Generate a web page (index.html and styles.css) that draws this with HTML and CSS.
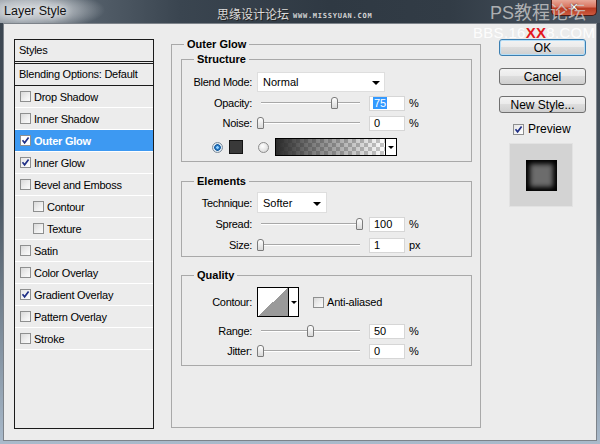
FILE: index.html
```html
<!DOCTYPE html>
<html>
<head>
<meta charset="utf-8">
<title>Layer Style</title>
<link rel="stylesheet" href="styles.css">
</head>
<body>
<div class="window">
  <div class="titlebar">
    <div class="title">Layer Style</div>
    <span class="wm-cn">思缘设计论坛</span>
    <span class="wm-url">WWW.MISSYUAN.COM</span>
    <span class="wm-ps">PS教程论坛</span>
  </div>
  <div class="client">
    <div class="styles">
      <div class="s-head">Styles</div>
      <div class="s-blend">Blending Options: Default</div>
      <div class="s-row"><span class="cb"></span>Drop Shadow</div>
      <div class="s-row"><span class="cb"></span>Inner Shadow</div>
      <div class="s-row sel"><span class="cb on"><svg width="9" height="9" viewBox="0 0 9 9"><path d="M1.5 4.3 L3.6 6.8 L7.6 1.6" fill="none" stroke="#1f2f86" stroke-width="1.7"/></svg></span>Outer Glow</div>
      <div class="s-row"><span class="cb on"><svg width="9" height="9" viewBox="0 0 9 9"><path d="M1.5 4.3 L3.6 6.8 L7.6 1.6" fill="none" stroke="#1f2f86" stroke-width="1.7"/></svg></span>Inner Glow</div>
      <div class="s-row"><span class="cb"></span>Bevel and Emboss</div>
      <div class="s-row sub"><span class="cb"></span>Contour</div>
      <div class="s-row sub"><span class="cb"></span>Texture</div>
      <div class="s-row"><span class="cb"></span>Satin</div>
      <div class="s-row"><span class="cb"></span>Color Overlay</div>
      <div class="s-row"><span class="cb on"><svg width="9" height="9" viewBox="0 0 9 9"><path d="M1.5 4.3 L3.6 6.8 L7.6 1.6" fill="none" stroke="#1f2f86" stroke-width="1.7"/></svg></span>Gradient Overlay</div>
      <div class="s-row"><span class="cb"></span>Pattern Overlay</div>
      <div class="s-row"><span class="cb"></span>Stroke</div>
    </div>

    <fieldset class="group main">
      <legend>Outer Glow</legend>

      <fieldset class="group sub-group structure">
        <legend>Structure</legend>
        <div class="f-row blend-row">
          <span class="lbl">Blend Mode:</span>
          <div class="select blend-select">Normal</div>
        </div>
        <div class="f-row gap1">
          <span class="lbl">Opacity:</span>
          <div class="slider"><span class="thumb" style="--v:75"></span></div>
          <div class="num"><span class="hl">75</span></div>
          <span class="unit">%</span>
        </div>
        <div class="f-row">
          <span class="lbl">Noise:</span>
          <div class="slider"><span class="thumb" style="--v:0"></span></div>
          <div class="num">0</div>
          <span class="unit">%</span>
        </div>
        <div class="f-row color-row">
          <span class="radio on"></span>
          <span class="swatch"></span>
          <span class="radio second"></span>
          <div class="grad"><div class="grad-fill"></div><div class="grad-arrow"></div></div>
        </div>
      </fieldset>

      <fieldset class="group sub-group elements">
        <legend>Elements</legend>
        <div class="f-row tech-row">
          <span class="lbl">Technique:</span>
          <div class="select tech-select">Softer</div>
        </div>
        <div class="f-row gap1">
          <span class="lbl">Spread:</span>
          <div class="slider"><span class="thumb" style="--v:100"></span></div>
          <div class="num">100</div>
          <span class="unit">%</span>
        </div>
        <div class="f-row gap1">
          <span class="lbl">Size:</span>
          <div class="slider"><span class="thumb" style="--v:0"></span></div>
          <div class="num">1</div>
          <span class="unit">px</span>
        </div>
      </fieldset>

      <fieldset class="group sub-group quality">
        <legend>Quality</legend>
        <div class="f-row contour-row">
          <span class="lbl">Contour:</span>
          <div class="contour"><div class="contour-curve"></div><div class="contour-arrow"></div></div>
          <span class="cb aa"></span>
          <span class="aa-text">Anti-aliased</span>
        </div>
        <div class="f-row range-row">
          <span class="lbl">Range:</span>
          <div class="slider"><span class="thumb" style="--v:50"></span></div>
          <div class="num">50</div>
          <span class="unit">%</span>
        </div>
        <div class="f-row">
          <span class="lbl">Jitter:</span>
          <div class="slider"><span class="thumb" style="--v:0"></span></div>
          <div class="num">0</div>
          <span class="unit">%</span>
        </div>
      </fieldset>
    </fieldset>

    <div class="side">
      <div class="btn def">OK</div>
      <div class="btn cancel">Cancel</div>
      <div class="btn newstyle">New Style...</div>
      <div class="preview-row"><span class="cb on"><svg width="9" height="9" viewBox="0 0 9 9"><path d="M1.5 4.3 L3.6 6.8 L7.6 1.6" fill="none" stroke="#1f2f86" stroke-width="1.7"/></svg></span><span>Preview</span></div>
      <div class="preview"><div class="preview-sq"></div></div>
    </div>

    <div class="wm-bbs">BBS.16<span class="red">XX</span>8.COM</div>
  </div>
  <div class="winx">✕</div>
</div>
</body>
</html>
```

FILE: styles.css
```css
* { box-sizing: border-box; }

body {
  margin: 0;
  font-family: "Liberation Sans", Arial, sans-serif;
  font-size: 11px;
  color: #000;
}

.window {
  width: 600px;
  height: 444px;
  display: flex;
  flex-direction: column;
  position: relative;
  overflow: hidden;
  background: linear-gradient(#39434e 0%, #4a5661 45%, #a9bacb 100%);
}

/* ---------- title bar ---------- */
.titlebar {
  height: 23px;
  flex-shrink: 0;
  position: relative;
  background:
    radial-gradient(ellipse 75px 20px at 30px 10px, rgba(214,218,222,0.98) 0%, rgba(200,205,210,0.8) 45%, rgba(120,130,140,0) 100%),
    linear-gradient(to right, #7d868f 0%, #56616c 14%, #3a4550 30%, #2f3943 55%, #323c46 75%, #4a5561 100%);
}

.title {
  padding: 4px 0 0 4px;
  font-size: 12.5px;
  line-height: 14px;
  color: #111;
  text-shadow: 0 0 5px #e8eaec, 0 0 9px #e8eaec;
}

.winx {
  position: absolute;
  z-index: 5;
  left: 551px;
  top: 0;
  width: 46px;
  height: 16px;
  border: 1px solid #4b1a14;
  border-top-width: 0;
  border-radius: 0 0 5px 5px;
  background: #c75038 linear-gradient(#e8a898 0%, #d97560 45%, #b83a22 55%, #cc5a3e 100%);
  color: #fff;
  font-family: "DejaVu Sans", sans-serif;
  font-weight: bold;
  font-size: 11px;
  line-height: 15px;
  text-align: center;
  text-shadow: 0 0 2px #4a1810, 0 0 1px #4a1810;
}

.wm-cn {
  position: absolute;
  left: 217px;
  top: 6px;
  font-family: "Noto Sans CJK SC", sans-serif;
  font-size: 12px;
  line-height: 16px;
  color: #dcdcdc;
  text-shadow: 1px 1px 0 #222, -1px 0 0 #444;
}

.wm-url {
  position: absolute;
  left: 293px;
  top: 12px;
  font-family: "DejaVu Sans Mono", monospace;
  font-weight: bold;
  font-size: 7px;
  line-height: 8px;
  letter-spacing: 0.75px;
  color: #d4d4d4;
}

.wm-ps {
  position: absolute;
  z-index: 6;
  left: 490px;
  top: 1px;
  font-family: "Liberation Sans", "Noto Sans CJK SC", sans-serif;
  font-size: 18px;
  line-height: 24px;
  color: rgba(205,205,205,0.8);
}

/* ---------- client area ---------- */
.client {
  flex: 1;
  margin: 0 3px 3px;
  border: 1px solid #7d838a;
  background: #ececec;
  display: flex;
  align-items: flex-start;
  padding: 15px 0 0 10px;
  position: relative;
}

.wm-bbs {
  position: absolute;
  left: 469px;
  top: 1px;
  font-size: 15px;
  line-height: 16px;
  letter-spacing: 0.3px;
  color: rgba(255,255,255,0.9);
  white-space: nowrap;
}
.wm-bbs .red {
  color: #e3171d;
  font-weight: bold;
}

/* ---------- styles list ---------- */
.styles {
  width: 140px;
  height: 390px;
  flex-shrink: 0;
  border: 1px solid #1b1b1b;
  letter-spacing: -0.25px;
}

.s-head {
  height: 24px;
  line-height: 21px;
  padding-left: 4px;
  border-bottom: 3px double #1b1b1b;
}

.s-blend {
  height: 22px;
  line-height: 21px;
  padding-left: 4px;
  border-bottom: 1px solid #1b1b1b;
}

.s-row {
  height: 22px;
  border-bottom: 1px solid #fff;
  display: flex;
  align-items: center;
  gap: 3px;
  padding-left: 5px;
}
.s-row.sub { padding-left: 18px; }
.s-row.sel {
  background: #3d99f2;
  color: #fff;
  font-weight: bold;
}
.s-row.sel .cb { background: #fff; }

.cb {
  width: 11px;
  height: 11px;
  flex-shrink: 0;
  border: 1px solid #8e8f8f;
  background: linear-gradient(135deg, #d9d9d9 0%, #f0f0f0 60%, #fbfbfb 100%);
  display: inline-flex;
  align-items: center;
  justify-content: center;
}
.cb.on { background: linear-gradient(135deg, #e6e6e6, #ffffff); }

/* ---------- fieldsets ---------- */
.group {
  margin: 0;
  min-width: 0;
  border: 1px solid #a9a9a9;
  padding: 0;
}
.group > legend {
  font-weight: bold;
  font-size: 11px;
  line-height: 14px;
  padding: 0 3px;
}

.main {
  width: 310px;
  height: 391px;
  flex-shrink: 0;
  margin: -2px 0 0 17px;
  padding: 1px 8px 0 9px;
}
.main > legend { margin-left: 3px; }

.sub-group > legend { margin-left: 12px; }
.structure { padding: 6px 0 4px; }
.elements { margin-top: 12px; padding: 4px 0 1px; }
.quality { margin-top: 11px; padding: 5px 0 4px; }

.f-row {
  display: flex;
  align-items: center;
  height: 20px;
}
.gap1 { margin-top: 1px; }

.lbl {
  width: 70px;
  margin-right: 5px;
  flex-shrink: 0;
  text-align: right;
  letter-spacing: -0.3px;
}

.select {
  position: relative;
  background: #fff;
  border: 1px solid #dedede;
  display: flex;
  align-items: center;
  padding-left: 5px;
}
.select::after {
  content: "";
  position: absolute;
  top: 50%;
  margin-top: -1px;
  border-left: 4px solid transparent;
  border-right: 4px solid transparent;
  border-top: 4px solid #000;
}
.blend-select { width: 128px; height: 20px; }
.blend-select::after { right: 4px; }
.tech-row { height: 21px; }
.tech-select { width: 70px; height: 21px; }
.tech-select::after { right: 5px; }

.slider {
  width: 106px;
  height: 20px;
  position: relative;
  flex-shrink: 0;
}
.slider::before {
  content: "";
  position: absolute;
  left: 4px;
  right: 3px;
  top: 9px;
  height: 1px;
  background: #a8a8a8;
  box-shadow: 0 1px 0 #fff;
}
.thumb {
  position: absolute;
  top: 4px;
  left: calc(var(--v) * 0.99px);
  width: 7px;
  height: 12px;
  border: 1px solid #7b7b7b;
  border-radius: 3px 3px 1px 1px;
  background: linear-gradient(#ffffff, #d9d9d9);
}

.num {
  width: 36px;
  height: 15px;
  margin-left: 6px;
  flex-shrink: 0;
  background: #fff;
  border: 1px solid #d6d6d6;
  padding-left: 4px;
  line-height: 13px;
}
.hl {
  display: inline-block;
  background: #3399ff;
  color: #fff;
  padding: 0 1px;
  line-height: 12px;
  margin-left: -1px;
}
.unit { margin-left: 4px; }

.color-row { margin-top: 4px; padding-left: 30px; }
.radio {
  width: 11px;
  height: 11px;
  flex-shrink: 0;
  border-radius: 50%;
  border: 1px solid #8c8c8c;
  background: radial-gradient(circle at 40% 35%, #ffffff 0%, #e6e6e6 55%, #cfcfcf 100%);
}
.radio.on {
  border-color: #7d8b99;
  background: radial-gradient(circle at 50% 50%, #8fd0ff 0 1px, #2577c6 1.6px, #1b5f9f 3px, #d8e6f2 3.6px, #f4f4f4 100%);
}
.radio.second { margin-left: 15px; }
.swatch {
  width: 14px;
  height: 14px;
  margin-left: 6px;
  flex-shrink: 0;
  background: #393939;
  border: 1px solid #141414;
}
.grad {
  width: 122px;
  height: 18px;
  margin-left: 6px;
  border: 1px solid #000;
  display: flex;
}
.grad-fill {
  flex: 1;
  background:
    linear-gradient(to right, #2a2a2a 0%, rgba(42,42,42,0.6) 35%, rgba(42,42,42,0) 100%),
    repeating-conic-gradient(#c8c8c8 0 25%, #ffffff 0 50%) 0 0 / 8px 8px;
}
.grad-arrow {
  width: 11px;
  border-left: 1px solid #000;
  background: #fff;
  position: relative;
}
.grad-arrow::after, .contour-arrow::after {
  content: "";
  position: absolute;
  left: 50%;
  top: 50%;
  margin: -1px 0 0 -3px;
  border-left: 3px solid transparent;
  border-right: 3px solid transparent;
  border-top: 3px solid #000;
}

.contour-row { height: 30px; }
.contour {
  width: 42px;
  height: 30px;
  border: 1px solid #000;
  display: flex;
  flex-shrink: 0;
}
.contour-curve {
  width: 30px;
  background: linear-gradient(to bottom right, #ffffff 50%, #9a9a9a 50%);
}
.contour-arrow {
  flex: 1;
  border-left: 1px solid #000;
  background: #fff;
  position: relative;
}
.cb.aa { margin-left: 14px; }
.aa-text { margin-left: 3px; letter-spacing: -0.2px; }
.range-row { margin-top: 4px; }

/* ---------- side column ---------- */
.side {
  width: 87px;
  margin-left: 18px;
  flex-shrink: 0;
  display: flex;
  flex-direction: column;
}
.btn {
  height: 17px;
  width: 87px;
  border: 1px solid #707070;
  border-radius: 3px;
  background: linear-gradient(#f3f3f3 0%, #ebebeb 45%, #dddddd 50%, #cfcfcf 100%);
  font-size: 12px;
  display: flex;
  align-items: center;
  justify-content: center;
}
.btn.def {
  border-color: #3c7fb1;
  box-shadow: inset 0 0 0 1px #b5def7;
}
.btn.cancel { margin-top: 12px; }
.btn.newstyle { margin-top: 11px; }

.preview-row {
  margin-top: 10px;
  padding-left: 14px;
  height: 12px;
  display: flex;
  align-items: center;
  gap: 4px;
  font-size: 12px;
}
.preview {
  margin: 8px 0 0 10px;
  width: 64px;
  height: 64px;
  background: #d3d3d3;
  border: 1px solid #e2e2e2;
  display: flex;
  align-items: center;
  justify-content: center;
}
.preview-sq {
  width: 31px;
  height: 31px;
  background: #6c6c6c;
  box-shadow: inset 0 0 5px 4px #000;
}
```
